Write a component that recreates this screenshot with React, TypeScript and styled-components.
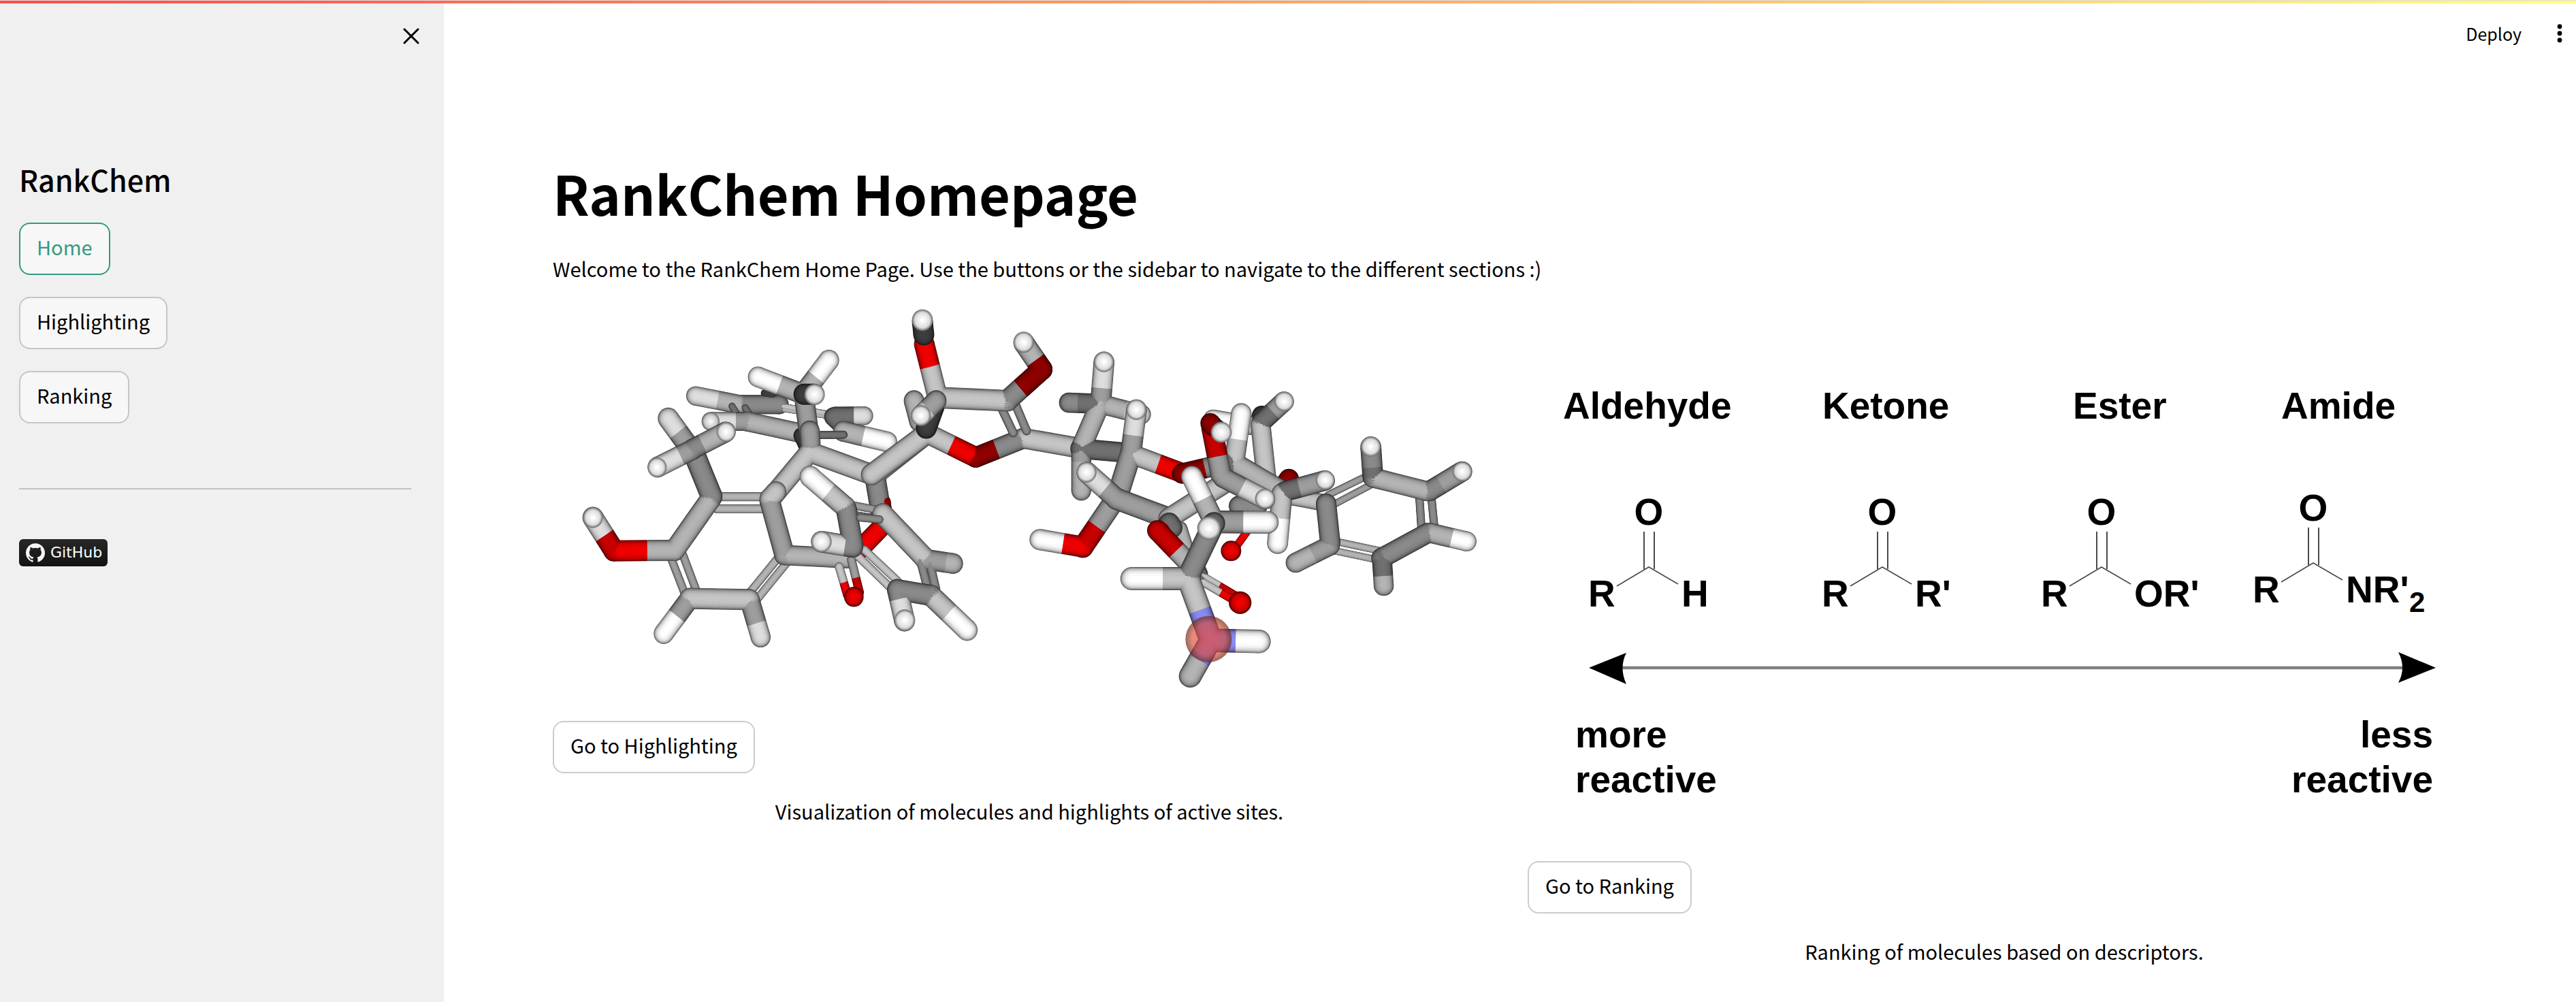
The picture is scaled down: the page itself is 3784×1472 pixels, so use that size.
import React from 'react';
import styled, { createGlobalStyle } from 'styled-components';

const GlobalStyle = createGlobalStyle`
  *, *::before, *::after { box-sizing: border-box; }
  body {
    margin: 0;
    background: #fff;
    color: #000;
    font-family: "Noto Sans CJK JP", "Noto Sans", sans-serif;
    font-size: 29px;
    line-height: 51px;
  }
`;

/* ---------- page frame ---------- */

const Page = styled.div`
  display: flex;
  flex-direction: column;
  min-height: 100vh;
`;

const Decoration = styled.div`
  height: 5px;
  border-top: 1px solid #dcdcdc;
  background: linear-gradient(90deg, #ff4b4b, #fffd80) padding-box;
`;

const Shell = styled.div`
  flex: 1;
  display: grid;
  grid-template-columns: 652px minmax(0, 1fr);
`;

/* ---------- sidebar ---------- */

const Sidebar = styled.aside`
  background: #f0f0f0;
  padding: 24px 24px 48px 28px;
`;

const CloseRow = styled.div`
  display: flex;
  justify-content: flex-end;
`;

const IconButton = styled.button<{ $width: number; $height: number }>`
  display: flex;
  align-items: center;
  justify-content: center;
  width: ${(p) => p.$width}px;
  height: ${(p) => p.$height}px;
  padding: 0;
  border: 0;
  background: none;
  color: #000;
  cursor: pointer;
`;

const Brand = styled.h2`
  margin: 160px 0 0;
  font-size: 43px;
  line-height: 52px;
  font-weight: 500;
`;

const NavList = styled.nav`
  display: flex;
  flex-direction: column;
  align-items: flex-start;
  gap: 32px;
  margin-top: 38px;
`;

const Button = styled.button<{ $active?: boolean; $onGrey?: boolean }>`
  padding: 8px 24px 14px;
  border: 2px solid ${(p) => (p.$active ? '#339a82' : p.$onGrey ? '#c6c6c6' : '#cccccc')};
  border-radius: 16px;
  background: ${(p) => (p.$onGrey ? '#f7f7f7' : '#fff')};
  color: ${(p) => (p.$active ? '#339a82' : '#000')};
  font: inherit;
  cursor: pointer;
`;

const Divider = styled.hr`
  margin: 95px 24px 73px 0;
  border: 0;
  height: 2px;
  background: #c3c3c3;
`;

const Badge = styled.a`
  display: flex;
  align-items: center;
  gap: 8px;
  width: fit-content;
  height: 40px;
  padding: 0 8px 0 10px;
  border-radius: 6px;
  background: linear-gradient(#272727, #131313);
  color: #fff;
  font-family: "DejaVu Sans", sans-serif;
  font-size: 22px;
  line-height: 40px;
  text-decoration: none;
`;

/* ---------- main ---------- */

const Main = styled.main`
  display: flex;
  flex-direction: column;
`;

const Toolbar = styled.header`
  display: flex;
  justify-content: flex-end;
  align-items: center;
  gap: 44px;
  padding: 24px 12px 0 0;
`;

const DeployButton = styled.button`
  padding: 0;
  border: 0;
  background: none;
  color: #000;
  font: inherit;
  font-size: 25px;
  line-height: 40px;
  cursor: pointer;
`;

const Content = styled.div`
  padding: 166px 140px 48px 160px;
`;

const Title = styled.h1`
  margin: 0;
  font-size: 79px;
  line-height: 96px;
  font-weight: 700;
`;

const Intro = styled.p`
  margin: 38px 0 0;
`;

const Columns = styled.div`
  display: grid;
  grid-template-columns: repeat(2, minmax(0, 1fr));
  align-items: start;
  gap: 32px;
  margin-top: 19px;
`;

const Column = styled.section`
  display: flex;
  flex-direction: column;
  align-items: flex-start;
  gap: 32px;
`;

const Picture = styled.svg`
  display: block;
  width: 100%;
  height: auto;
`;

const Caption = styled.p`
  align-self: stretch;
  margin: -2px 0 0;
  text-align: center;
`;

/* ---------- molecule drawing ---------- */

const TONES: Record<string, [number, number, number]> = {
  w: [255, 255, 255],
  v: [222, 222, 222],
  l: [197, 197, 197],
  u: [180, 180, 180],
  m: [158, 158, 158],
  g: [138, 138, 138],
  d: [112, 112, 112],
  k: [62, 62, 62],
  r: [240, 0, 0],
  s: [200, 0, 0],
  t: [144, 0, 0],
  b: [138, 138, 242],
};

// Stroke width factor and brightness, from the dark rim to the lit middle.
const LAYERS: [number, number][] = [
  [1, 0.32],
  [0.96, 0.5],
  [0.9, 0.65],
  [0.82, 0.77],
  [0.72, 0.87],
  [0.58, 0.94],
  [0.42, 0.98],
  [0.22, 1],
];

const shade = (tone: string, k: number) =>
  `rgb(${TONES[tone].map((c) => Math.round(c * k)).join(',')})`;

// x1, y1, x2, y2, width, tones (one or two letters), where the tone changes
type Bond = [number, number, number, number, number, string, number?];
// x, y, radius, tone
type Atom = [number, number, number, string];
type Fragment = { bonds?: Bond[]; atoms?: Atom[] };

function FragmentShape({ bonds = [], atoms = [] }: Fragment) {
  return (
    <g>
      {LAYERS.map(([f, k]) => (
        <g key={f}>
          {bonds.map(([x1, y1, x2, y2, w, tones, split = 0.5], i) => {
            const a = tones[0];
            const b = tones[1] || a;
            const mx = x1 + (x2 - x1) * split;
            const my = y1 + (y2 - y1) * split;
            return (
              <g key={i} strokeWidth={w * f}>
                <circle cx={x1} cy={y1} r={(w * f) / 2} fill={shade(a, k)} />
                <circle cx={x2} cy={y2} r={(w * f) / 2} fill={shade(b, k)} />
                <line x1={x1} y1={y1} x2={mx} y2={my} stroke={shade(a, k)} />
                <line x1={mx} y1={my} x2={x2} y2={y2} stroke={shade(b, k)} />
              </g>
            );
          })}
        </g>
      ))}
      {atoms.map(([x, y, r, tone], i) => (
        <circle key={i} cx={x} cy={y} r={r} fill={`url(#atom-${tone})`} />
      ))}
    </g>
  );
}

const LEFT: Fragment[] = [
  {
    bonds: [
      [850, 400, 885, 408, 34, 'k'],
      [740, 448, 915, 448, 82, 'g'],
      [740, 448, 545, 411, 82, 'uv', 0.5],
      [930, 455, 1130, 486, 24, 'l'],
      [935, 470, 1130, 500, 20, 'u'],
    ],
  },
  {
    bonds: [
      [706, 455, 735, 500, 30, 'd'],
      [764, 462, 790, 500, 30, 'd'],
      [1160, 497, 1288, 496, 80, 'dv', 0.65],
      [1152, 500, 1200, 545, 80, 'd'],
    ],
  },
  {
    bonds: [
      [770, 520, 1010, 570, 84, 'u'],
      [770, 520, 612, 520, 80, 'mv', 0.3],
      [1195, 562, 1390, 607, 88, 'uw', 0.46],
    ],
    atoms: [[612, 520, 39, 'v']],
  },
  { bonds: [[1060, 578, 1198, 577, 34, 'd'], [1010, 580, 1030, 620, 66, 'k']] },
  {
    bonds: [
      [1022, 400, 1050, 610, 88, 'm'],
      [1010, 400, 820, 330, 88, 'uw', 0.5],
      [1030, 390, 1133, 259, 90, 'uw', 0.45],
    ],
  },
  { bonds: [[1022, 404, 1068, 404, 90, 'k']], atoms: [[1070, 405, 45, 'w']] },
  {
    bonds: [
      [1062, 655, 1330, 750, 90, 'l'],
      [1048, 650, 872, 855, 90, 'l'],
      [1048, 560, 1052, 612, 88, 'm'],
    ],
  },
  {
    bonds: [
      [650, 841, 860, 841, 38, 'u'],
      [640, 893, 860, 893, 38, 'u'],
      [440, 1110, 502, 1265, 36, 'm'],
      [490, 1090, 548, 1240, 36, 'm'],
      [915, 1095, 780, 1255, 36, 'u'],
      [945, 1125, 815, 1280, 36, 'u'],
    ],
  },
  {
    bonds: [
      [935, 1090, 1212, 1104, 86, 'u'],
      [872, 858, 937, 1088, 90, 'm'],
      [872, 850, 900, 820, 90, 'l'],
      [612, 850, 452, 1070, 92, 'u'],
      [452, 1070, 185, 1072, 90, 'ur', 0.45],
      [185, 1070, 93, 930, 92, 'sv', 0.45],
      [520, 1275, 405, 1425, 88, 'mw', 0.5],
      [785, 1285, 832, 1440, 88, 'mv', 0.62],
      [520, 1275, 782, 1280, 90, 'l'],
      [540, 660, 616, 840, 96, 'g'],
      [540, 660, 425, 507, 92, 'mv', 0.62],
    ],
    atoms: [[93, 930, 44, 'w']],
  },
  {
    bonds: [
      [532, 640, 378, 715, 88, 'mv', 0.35],
      [532, 638, 678, 565, 88, 'gu', 0.3],
    ],
    atoms: [
      [376, 716, 42, 'w'],
      [680, 565, 42, 'w'],
    ],
  },
  {
    bonds: [
      [1178, 1140, 1215, 1262, 38, 'lr', 0.55],
      [1232, 1110, 1268, 1250, 38, 'ms', 0.55],
    ],
    atoms: [[1243, 1268, 43, 'r']],
  },
  {
    bonds: [
      [1270, 1065, 1375, 960, 84, 'r'],
      [1385, 860, 1390, 895, 40, 't'],
      [1338, 765, 1362, 905, 92, 'g'],
      [1330, 750, 1565, 570, 92, 'l'],
    ],
  },
  {
    bonds: [
      [1230, 876, 1370, 902, 34, 'm'],
      [1240, 918, 1356, 938, 34, 'g'],
      [1262, 1096, 1405, 1230, 36, 'l'],
      [1290, 1068, 1435, 1200, 36, 'l'],
    ],
  },
  {
    bonds: [
      [1205, 885, 1050, 755, 92, 'lw', 0.48],
      [1238, 1055, 1100, 1033, 92, 'gv', 0.25],
      [1210, 895, 1238, 1045, 92, 'g'],
    ],
    atoms: [[1100, 1033, 45, 'w']],
  },
];

const CENTRE: Fragment[] = [
  { bonds: [[188, 432, 212, 520, 90, 'u']] },
  {
    bonds: [
      [0, 747, 245, 570, 92, 'l'],
      [245, 570, 460, 673, 88, 'lr', 0.5],
      [670, 592, 460, 673, 88, 'gt', 0.57],
      [670, 592, 925, 635, 88, 'l'],
    ],
  },
  {
    bonds: [
      [572, 460, 625, 568, 38, 'g'],
      [636, 450, 684, 560, 38, 'g'],
    ],
  },
  {
    bonds: [
      [290, 420, 242, 548, 92, 'k'],
      [290, 418, 600, 432, 92, 'l'],
      [600, 430, 752, 298, 92, 'gt', 0.38],
      [752, 298, 672, 185, 92, 'tu', 0.35],
      [290, 410, 233, 190, 90, 'lr', 0.56],
    ],
    atoms: [[671, 182, 45, 'w']],
  },
  { bonds: [[231, 150, 225, 95, 92, 'k']], atoms: [[225, 88, 46, 'w']] },
  { bonds: [[286, 432, 220, 495, 90, 'mv', 0.55]], atoms: [[218, 495, 44, 'w']] },
  {
    bonds: [
      [1010, 445, 870, 440, 86, 'dg', 0.72],
      [1050, 455, 1190, 490, 84, 'uv', 0.5],
      [925, 640, 925, 814, 88, 'mu', 0.3],
      [1010, 440, 930, 620, 90, 'u'],
      [1012, 425, 1025, 268, 92, 'mv', 0.3],
      [920, 636, 1140, 655, 86, 'd'],
    ],
    atoms: [[1025, 266, 44, 'w']],
  },
  {
    bonds: [
      [1150, 660, 1370, 740, 86, 'lr', 0.52],
      [1085, 838, 932, 1056, 92, 'ms', 0.6],
      [932, 1055, 742, 1024, 90, 'rw', 0.46],
      [1146, 650, 1085, 838, 96, 'm'],
      [1146, 640, 1168, 472, 92, 'mv', 0.36],
    ],
    atoms: [[1168, 470, 44, 'w']],
  },
  {
    bonds: [
      [1080, 850, 1315, 935, 94, 'm'],
      [1080, 850, 950, 738, 92, 'mv', 0.38],
    ],
    atoms: [[948, 737, 44, 'w']],
  },
  {
    bonds: [
      [216, 1112, 246, 1225, 38, 'g'],
      [258, 1125, 284, 1235, 38, 'g'],
      [235, 1108, 360, 1126, 88, 'mu', 0.75],
      [50, 915, 232, 1100, 92, 'l'],
    ],
  },
  { bonds: [[-50, 930, 36, 938, 34, 'g']] },
  {
    bonds: [
      [262, 1262, 422, 1410, 92, 'lw', 0.5],
      [115, 1238, 262, 1262, 90, 'g'],
      [115, 1238, 146, 1370, 92, 'gv', 0.3],
    ],
    atoms: [[147, 1368, 46, 'w']],
  },
];

const RIGHT: Fragment[] = [
  { bonds: [[400, 270, 390, 300, 84, 'k'], [350, 315, 185, 287, 84, 'lw', 0.5]] },
  {
    bonds: [
      [395, 310, 425, 590, 88, 'l'],
      [400, 300, 498, 210, 88, 'dm', 0.5],
    ],
    atoms: [[499, 209, 43, 'w']],
  },
  {
    bonds: [
      [520, 550, 500, 580, 88, 't'],
      [300, 670, 380, 670, 90, 'g'],
      [345, 770, 280, 860, 34, 'r'],
    ],
    atoms: [[265, 868, 45, 'r']],
  },
  { bonds: [[40, 770, 90, 930, 66, 'u'], [235, 570, -10, 725, 92, 'l']] },
  {
    bonds: [
      [270, 475, 50, 527, 90, 'gt', 0.55],
      [310, 262, 280, 470, 90, 'wl', 0.55],
      [270, 475, 490, 605, 92, 'u'],
      [265, 475, 262, 482, 92, 'd'],
    ],
  },
  {
    bonds: [
      [540, 630, 685, 658, 76, 'l'],
      [692, 622, 870, 535, 32, 'm'],
      [715, 665, 885, 575, 32, 'm'],
      [1095, 630, 1104, 765, 36, 'g'],
      [1148, 630, 1160, 755, 36, 'g'],
      [725, 826, 915, 866, 32, 'u'],
      [715, 866, 900, 905, 32, 'u'],
    ],
  },
  {
    bonds: [
      [700, 845, 550, 920, 88, 'mu', 0.5],
      [684, 660, 702, 832, 90, 'g'],
      [1140, 788, 1303, 826, 88, 'uw', 0.6],
      [1130, 790, 928, 900, 90, 'g'],
      [930, 900, 938, 1022, 88, 'du', 0.65],
      [890, 545, 1130, 605, 88, 'u'],
      [1140, 604, 1283, 518, 90, 'gm', 0.35],
      [890, 540, 881, 410, 92, 'dg', 0.3],
    ],
    atoms: [
      [881, 408, 44, 'w'],
      [1284, 518, 43, 'w'],
    ],
  },
  {
    bonds: [
      [490, 615, 470, 835, 92, 'lw', 0.5],
      [505, 605, 678, 558, 90, 'dm', 0.35],
    ],
    atoms: [[680, 556, 42, 'w']],
  },
  {
    bonds: [
      [230, 545, 415, 640, 90, 'mv', 0.45],
      [180, 325, 220, 530, 92, 'sm', 0.62],
    ],
    atoms: [[415, 638, 44, 'w']],
  },
  { bonds: [[174, 305, 185, 318, 88, 't'], [200, 326, 222, 345, 80, 'k']], atoms: [[222, 345, 46, 'w']] },
  {
    bonds: [
      [-8, 745, 5, 765, 92, 'd'],
      [-25, 765, -18, 770, 84, 't'],
    ],
  },
  { bonds: [[-60, 778, 110, 955, 90, 'su', 0.5]] },
  {
    bonds: [
      [125, 965, 290, 1062, 26, 'ls', 0.55],
      [140, 1005, 285, 1090, 36, 'lr', 0.55],
      [120, 960, 125, 970, 76, 'd'],
    ],
    atoms: [[305, 1096, 50, 'r']],
  },
  {
    bonds: [
      [80, 990, -172, 990, 102, 'lw', 0.46],
      [80, 1000, 175, 1258, 102, 'lb', 0.5],
      [175, 1262, 85, 1420, 100, 'bu', 0.56],
      [175, 1262, 388, 1267, 104, 'bw', 0.52],
      [185, 755, 82, 970, 98, 'g'],
    ],
  },
  {
    bonds: [
      [190, 740, 425, 742, 100, 'mw', 0.55],
      [190, 740, 92, 540, 94, 'uw', 0.5],
    ],
  },
  { bonds: [[190, 746, 180, 756, 98, 'd']], atoms: [[168, 768, 52, 'w'], [166, 1257, 102, 'site']] },
];

const ATOM_STOPS: Record<string, [string, string, string]> = {
  w: ['#ffffff', '#dcdcdc', '#666666'],
  v: ['#f6f6f6', '#c8c8c8', '#666666'],
  r: ['#f80000', '#c80000', '#4a0000'],
};

function MoleculePicture() {
  return (
    <Picture viewBox="812 439 1400 588" role="img" aria-label="Molecule with a highlighted active site">
      <defs>
        {Object.entries(ATOM_STOPS).map(([tone, [a, b, c]]) => (
          <radialGradient key={tone} id={`atom-${tone}`}>
            <stop offset="0.1" stopColor={a} />
            <stop offset="0.72" stopColor={b} />
            <stop offset="1" stopColor={c} />
          </radialGradient>
        ))}
        <radialGradient id="atom-site">
          <stop offset="0" stopColor="#f04838" stopOpacity="0.7" />
          <stop offset="0.7" stopColor="#d84832" stopOpacity="0.64" />
          <stop offset="1" stopColor="#6a2818" stopOpacity="0.7" />
        </radialGradient>
      </defs>
      <g transform="translate(840 440) scale(0.3333 0.3444)">
        {LEFT.map((f, i) => (
          <FragmentShape key={i} {...f} />
        ))}
      </g>
      <g transform="translate(1280 440) scale(0.3333 0.3444)">
        {CENTRE.map((f, i) => (
          <FragmentShape key={i} {...f} />
        ))}
      </g>
      <g transform="translate(1720 520) scale(0.3333 0.3333)">
        {RIGHT.map((f, i) => (
          <FragmentShape key={i} {...f} />
        ))}
      </g>
    </Picture>
  );
}

/* ---------- reactivity scale drawing ---------- */

const Label = styled.text`
  font-family: "Liberation Sans", Arial, sans-serif;
  font-size: 55px;
  font-weight: 700;
  fill: #000;
`;

const Subscript = styled(Label)`
  font-size: 42px;
`;

const COMPOUNDS = [
  { name: 'Aldehyde', nameX: 2296, x: 2422, y: 833, group: 'H' },
  { name: 'Ketone', nameX: 2677, x: 2765, y: 833, group: "R'" },
  { name: 'Ester', nameX: 3045, x: 3087, y: 833, group: "OR'" },
  { name: 'Amide', nameX: 3351, x: 3398, y: 827, group: "NR'", count: '2' },
];

function ReactivityPicture() {
  return (
    <Picture viewBox="2244 439 1400 794" role="img" aria-label="Carbonyl compounds from more to less reactive">
      {COMPOUNDS.map(({ name, nameX, x, y, group, count }) => (
        <g key={name}>
          <Label x={nameX} y={615}>{name}</Label>
          <Label x={x} y={y - 62} textAnchor="middle">O</Label>
          <Label x={x - 89} y={y + 58}>R</Label>
          <Label x={x + 48} y={y + 58}>{group}</Label>
          {count && <Subscript x={x + 141} y={y + 72}>{count}</Subscript>}
          <g fill="none" stroke="#4a4a4a" strokeWidth="2">
            <path d={`M${x - 7} ${y - 52}V${y + 3}M${x + 8} ${y - 52}V${y + 3}`} />
            <path d={`M${x - 47} ${y + 28}L${x} ${y}L${x + 43} ${y + 25}`} strokeWidth="1.6" />
          </g>
        </g>
      ))}
      <path d="M2382 981H3530" stroke="#808080" strokeWidth="4.5" />
      <path d="M2334 981L2389 959Q2378 981 2389 1005Z" />
      <path d="M3578 981L3523 958Q3535 981 3523 1003Z" />
      <Label x={2314} y={1098}>more</Label>
      <Label x={2314} y={1164}>reactive</Label>
      <Label x={3574} y={1098} textAnchor="end">less</Label>
      <Label x={3574} y={1164} textAnchor="end">reactive</Label>
    </Picture>
  );
}

/* ---------- page ---------- */

export default function App() {
  return (
    <>
      <GlobalStyle />
      <Page>
        <Decoration />
        <Shell>
          <Sidebar>
            <CloseRow>
              <IconButton type="button" aria-label="Close sidebar" $width={48} $height={48}>
                <svg width="24" height="24" viewBox="0 0 24 24" fill="none" stroke="currentColor" strokeWidth="3" strokeLinecap="round">
                  <path d="M2 2L22 22M22 2L2 22" />
                </svg>
              </IconButton>
            </CloseRow>
            <Brand>RankChem</Brand>
            <NavList aria-label="Sections">
              <Button type="button" $onGrey $active aria-current="page">Home</Button>
              <Button type="button" $onGrey>Highlighting</Button>
              <Button type="button" $onGrey>Ranking</Button>
            </NavList>
            <Divider />
            <Badge href="#github">
              <svg width="28" height="28" viewBox="0 0 24 24" fill="#f5f5f5" aria-hidden="true">
                <path d="M12 .297c-6.63 0-12 5.373-12 12 0 5.303 3.438 9.8 8.205 11.385.6.113.82-.258.82-.577 0-.285-.01-1.04-.015-2.04-3.338.724-4.042-1.61-4.042-1.61C4.422 18.07 3.633 17.7 3.633 17.7c-1.087-.744.084-.729.084-.729 1.205.084 1.838 1.236 1.838 1.236 1.07 1.835 2.809 1.305 3.495.998.108-.776.417-1.305.76-1.605-2.665-.3-5.466-1.332-5.466-5.93 0-1.31.465-2.38 1.235-3.22-.135-.303-.54-1.523.105-3.176 0 0 1.005-.322 3.3 1.23.96-.267 1.98-.399 3-.405 1.02.006 2.04.138 3 .405 2.28-1.552 3.285-1.23 3.285-1.23.645 1.653.24 2.873.12 3.176.765.84 1.23 1.91 1.23 3.22 0 4.61-2.805 5.625-5.475 5.92.42.36.81 1.096.81 2.22 0 1.606-.015 2.896-.015 3.286 0 .315.21.69.825.57C20.565 22.092 24 17.592 24 12.297c0-6.627-5.373-12-12-12" />
              </svg>
              GitHub
            </Badge>
          </Sidebar>
          <Main>
            <Toolbar>
              <DeployButton type="button">Deploy</DeployButton>
              <IconButton type="button" aria-label="Main menu" $width={24} $height={40}>
                <svg width="8" height="28" viewBox="0 0 8 28" fill="currentColor">
                  <circle cx="4" cy="4" r="3.4" />
                  <circle cx="4" cy="14" r="3.4" />
                  <circle cx="4" cy="24" r="3.4" />
                </svg>
              </IconButton>
            </Toolbar>
            <Content>
              <Title>RankChem Homepage</Title>
              <Intro>
                Welcome to the RankChem Home Page. Use the buttons or the sidebar to navigate to the different sections :)
              </Intro>
              <Columns>
                <Column>
                  <MoleculePicture />
                  <Button type="button">Go to Highlighting</Button>
                  <Caption>Visualization of molecules and highlights of active sites.</Caption>
                </Column>
                <Column>
                  <ReactivityPicture />
                  <Button type="button">Go to Ranking</Button>
                  <Caption>Ranking of molecules based on descriptors.</Caption>
                </Column>
              </Columns>
            </Content>
          </Main>
        </Shell>
      </Page>
    </>
  );
}
